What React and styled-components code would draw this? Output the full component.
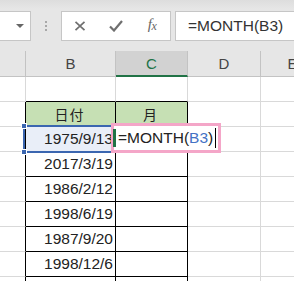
import React from "react";
import styled, { createGlobalStyle } from "styled-components";

const GRID = "#d9d9d9";
const HEAD_LINE = "#c3c3c3";
const BLACK = "#000";

const GlobalStyle = createGlobalStyle`
  html, body {
    margin: 0;
    padding: 0;
    background: #fff;
    overflow: hidden;
  }
  * {
    box-sizing: border-box;
  }
`;

const Sheet = styled.div`
  width: 294px;
  height: 281px;
  overflow: hidden;
  font-family: "Liberation Sans", Arial, sans-serif;
  color: #222;
`;

// formula bar
const FormulaArea = styled.div`
  height: 51px;
  display: flex;
  align-items: flex-start;
  padding-top: 11px;
  background: linear-gradient(to bottom, #dddddd 0, #e6e6e6 9px, #e6e6e6 100%);
`;

const Box = styled.div`
  height: 30px;
  background: #fff;
  border: 1px solid #c6c6c6;
`;

const NameBox = styled(Box)`
  width: 32px;
  margin-left: -1px;
  display: flex;
  align-items: center;
  justify-content: flex-end;
  padding-right: 6px;
`;

const Caret = styled.span`
  width: 0;
  height: 0;
  border-left: 4px solid transparent;
  border-right: 4px solid transparent;
  border-top: 4px solid #666;
`;

const Grip = styled.div`
  width: 2px;
  height: 30px;
  margin-left: 14px;
  display: flex;
  flex-direction: column;
  justify-content: center;
  gap: 2px;
  span {
    width: 2px;
    height: 2px;
    background: #a8a8a8;
  }
`;

const ActionBox = styled(Box)`
  width: 110px;
  margin-left: 14px;
  display: grid;
  grid-template-columns: repeat(3, 1fr);
  align-items: center;
  justify-items: center;
`;

const Fx = styled.span`
  font-family: "Liberation Serif", "Times New Roman", serif;
  font-style: italic;
  font-size: 15px;
  color: #666;
  letter-spacing: -0.5px;
  margin-top: -2px;
  sub {
    font-size: 12px;
    vertical-align: -1px;
  }
`;

const FormulaInput = styled(Box)`
  flex: 1;
  margin-left: 4px;
  margin-right: -2px;
  padding-left: 12px;
  display: flex;
  align-items: center;
  font-size: 15.5px;
  color: #333;
`;

// grid
const Row = styled.div`
  display: grid;
  grid-template-columns: 26px 90px 72px 73px 64px;
`;

const HeadCell = styled.div`
  height: 26px;
  display: flex;
  align-items: center;
  justify-content: center;
  font-size: 15px;
  color: ${({ $active }) => ($active ? "#217346" : "#444")};
  background: ${({ $active }) => ($active ? "#d2d2d2" : "#e6e6e6")};
  border-right: 1px solid ${HEAD_LINE};
  border-bottom: ${({ $active }) =>
    $active ? "2px solid #217346" : `1px solid ${HEAD_LINE}`};
  padding-top: ${({ $active }) => ($active ? "1px" : "0")};
`;

const Cell = styled.div`
  position: relative;
  height: 25px;
  display: flex;
  align-items: center;
  justify-content: ${({ $align }) =>
    $align === "right" ? "flex-end" : $align === "center" ? "center" : "flex-start"};
  padding-right: 2px;
  font-size: 15.5px;
  white-space: nowrap;
  background: ${({ $bg }) => $bg || "#fff"};
  border-right: 1px solid ${({ $right }) => $right};
  border-bottom: 1px solid ${({ $bottom }) => $bottom};
`;

const Jp = styled.span`
  font-family: "Noto Sans CJK JP", sans-serif;
  font-size: 14px;
  letter-spacing: 1px;
`;

const Selection = styled.div`
  position: absolute;
  left: -3px;
  top: -2px;
  width: 92px;
  height: 28px;
  border: 2px solid #3b66b0;
  pointer-events: none;
  z-index: 1;
`;

const Handle = styled.span`
  position: absolute;
  left: -4px;
  ${({ $pos }) => ($pos === "top" ? "top: -4px;" : "bottom: -4px;")}
  width: 6px;
  height: 6px;
  background: #3b66b0;
  border: 1px solid #fff;
`;

const EditBox = styled.div`
  position: absolute;
  left: -5px;
  top: -4px;
  width: 110px;
  height: 30px;
  border: 3px solid #f4a6c8;
  background: #fff;
  z-index: 3;
  display: flex;
  align-items: center;
  padding-left: 4px;
  font-size: 15.5px;
  color: #222;
`;

const ActiveBar = styled.span`
  position: absolute;
  left: -1px;
  top: 3px;
  width: 3px;
  height: 18px;
  background: #217346;
`;

const Ref = styled.span`
  color: #4472c4;
`;

const TextCaret = styled.span`
  display: inline-block;
  width: 1px;
  height: 20px;
  background: #000;
  margin-left: 2px;
`;

const columns = ["", "B", "C", "D", "E"];

const rows = [
  [null, null],
  ["日付", "月"],
  ["1975/9/13", ""],
  ["2017/3/19", ""],
  ["1986/2/12", ""],
  ["1998/6/19", ""],
  ["1987/9/20", ""],
  ["1998/12/6", ""],
  ["", ""],
];

function CrossIcon() {
  return (
    <svg width="12" height="10" viewBox="0 0 12 10">
      <path d="M1.5 0.8 L10.5 9.2 M10.5 0.8 L1.5 9.2" stroke="#6f6f6f" strokeWidth="1.7" fill="none" />
    </svg>
  );
}

function CheckIcon() {
  return (
    <svg width="14" height="12" viewBox="0 0 14 12">
      <path d="M1 6.5 L5 10.5 L13 1" stroke="#6f6f6f" strokeWidth="2.2" fill="none" />
    </svg>
  );
}

function BodyRow({ index, data }) {
  const inTable = index >= 1;
  const isHeader = index === 1;
  const [b, c] = data;

  return (
    <Row>
      <Cell $right={inTable ? BLACK : GRID} $bottom={GRID} />
      <Cell
        $right={inTable ? BLACK : GRID}
        $bottom={BLACK}
        $align={isHeader ? "center" : "right"}
        $bg={isHeader ? "#c6e0b4" : index === 2 ? "#e9eef8" : "#fff"}
      >
        {isHeader ? <Jp>{b}</Jp> : b}
        {index === 2 && (
          <Selection>
            <Handle $pos="top" />
            <Handle $pos="bottom" />
          </Selection>
        )}
      </Cell>
      <Cell
        $right={inTable ? BLACK : GRID}
        $bottom={BLACK}
        $align="center"
        $bg={isHeader ? "#c6e0b4" : "#fff"}
      >
        {isHeader ? <Jp>{c}</Jp> : c}
        {index === 2 && (
          <EditBox>
            <ActiveBar />
            =MONTH(<Ref>B3</Ref>)
            <TextCaret />
          </EditBox>
        )}
      </Cell>
      <Cell $right={GRID} $bottom={GRID} />
      <Cell $right={GRID} $bottom={GRID} />
    </Row>
  );
}

export default function App() {
  return (
    <>
      <GlobalStyle />
      <Sheet>
        <FormulaArea>
          <NameBox>
            <Caret />
          </NameBox>
          <Grip>
            <span />
            <span />
            <span />
          </Grip>
          <ActionBox>
            <CrossIcon />
            <CheckIcon />
            <Fx>
              f<sub>x</sub>
            </Fx>
          </ActionBox>
          <FormulaInput>=MONTH(B3)</FormulaInput>
        </FormulaArea>
        <Row>
          {columns.map((col) => (
            <HeadCell key={col || "A"} $active={col === "C"}>
              {col}
            </HeadCell>
          ))}
        </Row>
        {rows.map((data, i) => (
          <BodyRow key={i} index={i} data={data} />
        ))}
      </Sheet>
    </>
  );
}
